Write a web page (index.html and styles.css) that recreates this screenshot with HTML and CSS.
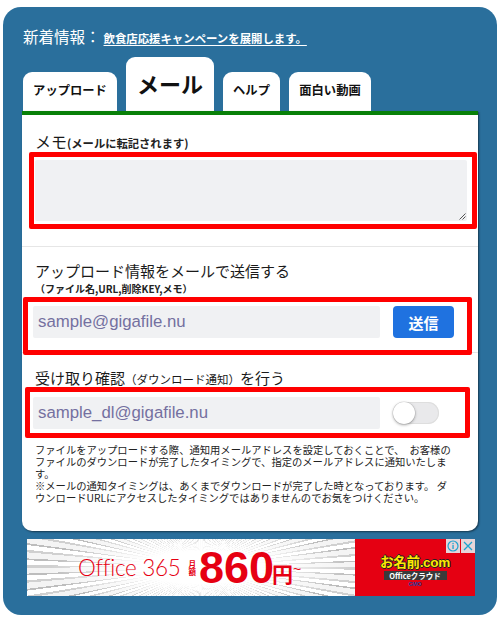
FILE: index.html
```html
<!DOCTYPE html>
<html lang="ja">
<head>
<meta charset="utf-8">
<title>メール</title>
<link rel="stylesheet" href="styles.css">
</head>
<body>
<div class="panel">
  <div class="news">
    <span class="news-label">新着情報：</span>
    <a class="news-link" href="#">飲食店応援キャンペーンを展開します。</a>
  </div>
  <div class="tabs">
    <div class="tab tab-upload">アップロード</div>
    <div class="tab tab-mail">メール</div>
    <div class="tab tab-help">ヘルプ</div>
    <div class="tab tab-movie">面白い動画</div>
  </div>
  <div class="card">
    <section class="sec sec-memo">
      <div class="label"><span class="label-main">メモ</span><span class="label-sub">(メールに転記されます)</span></div>
      <div class="mark mark-memo">
        <div class="memo-box">
          <svg class="resize" width="8" height="8" viewBox="0 0 8 8"><path d="M7.5 1.5 L1.5 7.5 M7.5 4.5 L4.5 7.5" stroke="#555" stroke-width="1" fill="none"/></svg>
        </div>
      </div>
    </section>
    <section class="sec sec-send">
      <div class="title">アップロード情報をメールで送信する</div>
      <div class="subtitle">（ファイル名,URL,削除KEY,メモ）</div>
      <div class="mark mark-send">
        <div class="field">sample@gigafile.nu</div>
        <div class="btn">送信</div>
      </div>
    </section>
    <section class="sec sec-dl">
      <div class="title">受け取り確認<span class="title-sub">（ダウンロード通知）</span>を行う</div>
      <div class="mark mark-dl">
        <div class="field">sample_dl@gigafile.nu</div>
        <div class="toggle"><div class="knob"></div></div>
      </div>
      <p class="note">ファイルをアップロードする際、通知用メールアドレスを設定しておくことで、　お客様の<br>ファイルのダウンロードが完了したタイミングで、指定のメールアドレスに通知いたしま<br>す。<br>※メールの通知タイミングは、あくまでダウンロードが完了した時となっております。 ダ<br>ウンロードURLにアクセスしたタイミングではありませんのでお気をつけください。</p>
    </section>
  </div>
  <div class="ad">
    <div class="ad-left">
      <span class="ad-office">Office 365</span>
      <span class="ad-month"><span>月</span><span>額</span></span>
      <span class="ad-price">860</span>
      <span class="ad-yen">円</span>
      <span class="ad-tilde">~</span>
    </div>
    <div class="ad-right">
      <div class="ad-brand">お名前<span class="ad-com">.com</span></div>
      <div class="ad-cloud">Officeクラウド</div>
      <div class="ad-gmo">GMO</div>
    </div>
    <div class="ad-icons">
      <span class="ad-icon"><svg width="12" height="12" viewBox="0 0 12 12"><circle cx="6" cy="6" r="5" stroke="#1ea4cf" stroke-width="1.2" fill="none"/><rect x="5.4" y="5" width="1.3" height="4" fill="#1ea4cf"/><rect x="5.4" y="2.9" width="1.3" height="1.3" fill="#1ea4cf"/></svg></span>
      <span class="ad-icon"><svg width="12" height="12" viewBox="0 0 12 12"><path d="M2 2 L10 10 M10 2 L2 10" stroke="#1ea4cf" stroke-width="1.3" fill="none"/></svg></span>
    </div>
  </div>
</div>
</body>
</html>
```

FILE: styles.css
```css
html, body {
  margin: 0;
  padding: 0;
  background: #ffffff;
}

body {
  font-family: "Noto Sans CJK JP", "Noto Sans", sans-serif;
  color: #1a1a1a;
}

.panel {
  margin: 7px 3px 0;
  padding: 0 19px 19px;
  background: #2a6f9c;
  border-radius: 18px;
  display: flex;
  flex-direction: column;
}

/* news line */
.news {
  padding-top: 20px;
  height: 18px;
  line-height: 18px;
  display: flex;
  align-items: baseline;
  color: #ffffff;
}

.news-label {
  font-size: 15.5px;
  padding-left: 1px;
}

.news-link {
  margin-left: 3px;
  font-size: 11.4px;
  font-weight: bold;
  color: #ffffff;
  text-decoration: underline;
  text-underline-offset: 2px;
}

/* tabs */
.tabs {
  margin-top: 12px;
  padding-left: 1px;
  display: flex;
  align-items: flex-end;
  gap: 9px;
}

.tab {
  height: 39px;
  box-sizing: border-box;
  padding-bottom: 3px;
  background: #ffffff;
  border-radius: 9px 9px 0 0;
  display: flex;
  align-items: center;
  justify-content: center;
  font-size: 12.3px;
  font-weight: bold;
  color: #111;
}

.tab-upload { width: 94px; }
.tab-mail { width: 88px; height: 54px; font-size: 22px; }
.tab-help { width: 57px; }
.tab-movie { width: 82px; }

/* card */
.card {
  background: #ffffff;
  border-top: 4px solid #088008;
  border-radius: 0 0 10px 10px;
  box-shadow: 1px 1px 2px rgba(0, 0, 0, 0.5);
  padding-bottom: 27px;
}

.sec {
  padding-left: 13px;
}

.sec-memo {
  padding-top: 16px;
  padding-bottom: 17px;
  border-bottom: 1px solid #e6e6e6;
}

.label {
  height: 20px;
  line-height: 20px;
  display: flex;
  align-items: baseline;
}

.label-main {
  font-size: 16px;
}

.label-sub {
  font-size: 11.3px;
  font-weight: bold;
  color: #222;
}

.mark {
  border: 5px solid #ff0000;
  border-radius: 2px;
  box-sizing: border-box;
}

.mark-memo {
  margin-top: 1px;
  margin-left: -6px;
  width: 448px;
  height: 77px;
  padding: 3px 5px 3px 1px;
}

.memo-box {
  position: relative;
  height: 61px;
  background: #f0f1f3;
  border-radius: 2px;
}

.resize {
  position: absolute;
  right: 1px;
  bottom: 1px;
}

.sec-send {
  padding-top: 14px;
  border-bottom: 1px solid #e6e6e6;
}

.title {
  height: 20px;
  line-height: 20px;
  font-size: 15px;
  color: #1a1a1a;
}

.subtitle {
  height: 15px;
  line-height: 15px;
  font-size: 10px;
  font-weight: bold;
  color: #222;
}

.mark-send {
  margin-top: 1px;
  margin-left: -12px;
  margin-bottom: -3px;
  width: 449px;
  height: 58px;
  padding: 4px 0 0 5px;
  display: flex;
  align-items: flex-start;
  gap: 13px;
  position: relative;
}

.field {
  width: 347px;
  height: 32px;
  line-height: 32px;
  padding-left: 5px;
  box-sizing: border-box;
  background: #f0f1f3;
  border-radius: 2px;
  font-family: "Liberation Sans", Arial, sans-serif;
  font-size: 16.8px;
  color: #7470a0;
}

.btn {
  width: 61px;
  height: 32px;
  background: #1f72e0;
  border-radius: 4px;
  color: #ffffff;
  font-size: 15px;
  font-weight: bold;
  display: flex;
  align-items: center;
  justify-content: center;
}

.sec-dl {
  padding-top: 15px;
}

.title-sub {
  font-size: 11.5px;
}

.mark-dl {
  margin-top: -1px;
  margin-left: -10px;
  width: 445px;
  height: 51px;
  padding: 0 0 0 3px;
  display: flex;
  align-items: center;
  gap: 13px;
}

.toggle {
  width: 46px;
  height: 22px;
  border-radius: 11px;
  background: #e9e9eb;
  box-shadow: inset 0 0 0 1px #dedede;
  position: relative;
}

.knob {
  position: absolute;
  left: 0;
  top: 0;
  width: 22px;
  height: 22px;
  border-radius: 50%;
  background: #ffffff;
  box-shadow: 0 1px 3px rgba(0, 0, 0, 0.35), 0 0 0 0.5px rgba(0, 0, 0, 0.1);
}

.note {
  margin: 6px 0 0;
  font-size: 10.3px;
  line-height: 12px;
  color: #222;
  white-space: nowrap;
}

/* ad */
.ad {
  margin-top: 8px;
  margin-left: 5px;
  width: 448px;
  height: 57px;
  display: flex;
  position: relative;
}

.ad-left {
  width: 328px;
  display: flex;
  align-items: center;
  padding-left: 51px;
  box-sizing: border-box;
  background:
    radial-gradient(ellipse 150px 40px at 53% 50%, #ffffff 40%, rgba(255,255,255,0) 100%),
    repeating-conic-gradient(from 0deg at 53% 50%, #d0d0d0 0deg 0.8deg, #ffffff 0.8deg 2.4deg, #bdbdbd 2.4deg 3deg, #f4f4f4 3deg 5deg);
  color: #e60012;
}

.ad-office {
  font-family: "Lato", "Open Sans", sans-serif;
  font-weight: 300;
  font-size: 22.5px;
  letter-spacing: -0.3px;
}

.ad-month {
  margin-left: 8px;
  display: flex;
  flex-direction: column;
  font-size: 7.5px;
  font-weight: bold;
  line-height: 8px;
}

.ad-price {
  margin-left: 3px;
  font-family: "Liberation Sans", Arial, sans-serif;
  font-weight: bold;
  font-size: 45px;
  line-height: 45px;
}

.ad-yen {
  margin-left: -2px;
  margin-top: 10px;
  font-size: 21px;
  font-weight: bold;
}

.ad-tilde {
  margin-top: 2px;
  font-family: "Liberation Sans", Arial, sans-serif;
  font-size: 14px;
}

.ad-right {
  width: 120px;
  background: #e50012;
  display: flex;
  flex-direction: column;
  align-items: center;
  justify-content: center;
  padding-top: 6px;
  box-sizing: border-box;
}

.ad-brand {
  font-size: 13.5px;
  font-weight: bold;
  line-height: 14px;
  color: #ffe800;
  text-shadow: -1px 0 #222, 1px 0 #222, 0 -1px #222, 0 1px #222;
  letter-spacing: -0.3px;
}

.ad-com {
  font-family: "Liberation Sans", Arial, sans-serif;
}

.ad-cloud {
  margin-top: 1px;
  width: 63px;
  background: #3a3a3a;
  color: #ffffff;
  font-size: 7.5px;
  font-weight: bold;
  line-height: 9px;
  text-align: center;
}

.ad-gmo {
  margin-top: 1px;
  font-family: "Liberation Sans", Arial, sans-serif;
  font-size: 5.5px;
  font-weight: bold;
  color: #1d3f9e;
  line-height: 7px;
}

.ad-icons {
  position: absolute;
  top: 0;
  right: 0;
  display: flex;
  gap: 1px;
}

.ad-icon {
  width: 14px;
  height: 14px;
  background: rgba(230, 236, 240, 0.9);
  display: flex;
  align-items: center;
  justify-content: center;
}
```
